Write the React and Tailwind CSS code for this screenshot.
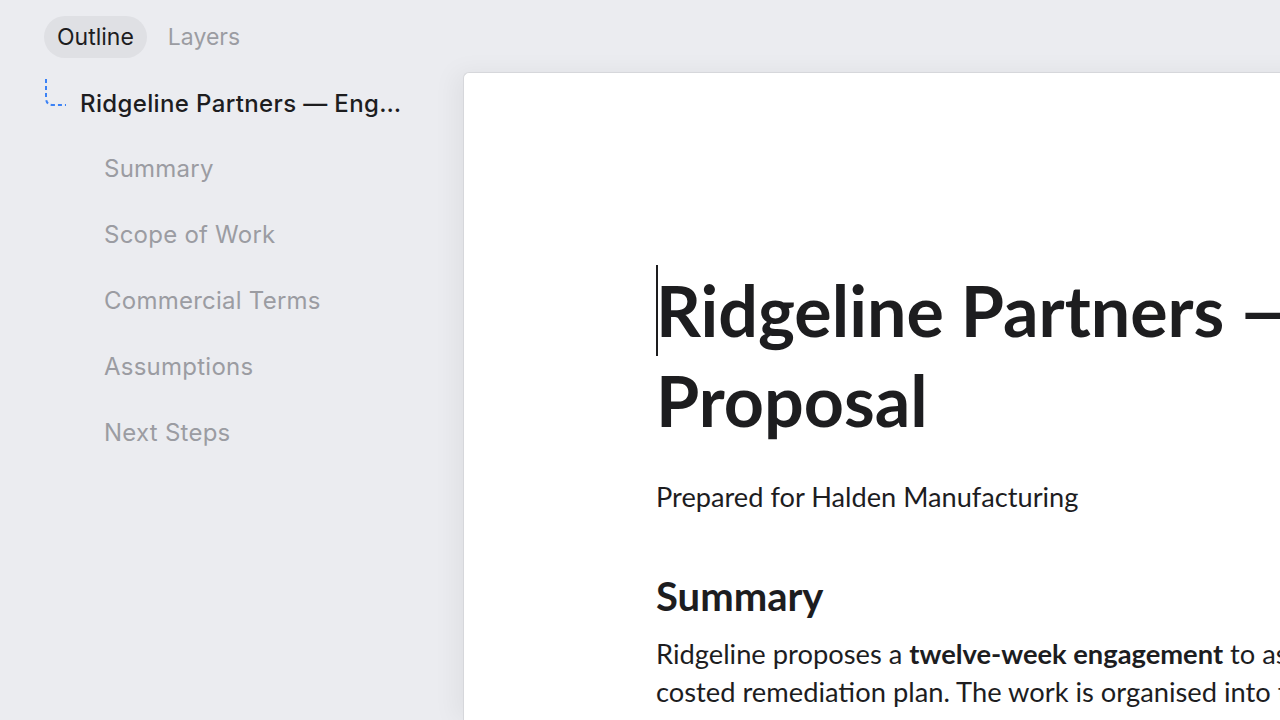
import React from "react";

const sections = ["Summary", "Scope of Work", "Commercial Terms", "Assumptions", "Next Steps"];

const TreeIcon = () => (
  <svg width="24" height="30" viewBox="0 0 24 30" className="shrink-0">
    <path
      d="M2 1 V20 Q2 27 9 27 H22"
      fill="none"
      stroke="#3b82f6"
      strokeWidth="2"
      strokeDasharray="4 3"
    />
  </svg>
);

const Sidebar = () => (
  <aside className="w-[463px] shrink-0 h-full flex flex-col font-['Inter',sans-serif]">
    <div className="flex items-center gap-[8px] pl-[44px] pt-4">
      <button className="h-[42px] px-[13px] rounded-full bg-[#dfe0e4] text-[23px] text-[#1d1d1f]">
        Outline
      </button>
      <button className="h-[42px] px-[13px] rounded-full text-[23px] text-[#9b9ca2]">
        Layers
      </button>
    </div>
    <nav className="flex flex-col pl-[44px] pr-[56px] mt-[20px]">
      <div className="flex items-start gap-[12px] h-[58px]">
        <TreeIcon />
        <span className="truncate pt-[8px] text-[24px] font-medium text-[#1d1d1f] tracking-[0.015em]">
          Ridgeline Partners — Engagement Proposal
        </span>
      </div>
      {sections.map((s) => (
        <div key={s} className="h-[66px] pl-[60px] flex items-center text-[24px] text-[#9b9ca2] tracking-[0.01em]">
          {s}
        </div>
      ))}
    </nav>
  </aside>
);

const Page = () => (
  <main className="flex-1 pt-[72px] min-w-0">
    <div className="h-full w-[1000px] bg-white rounded-tl-[6px] border-l border-t border-[#d6d7db] shadow-[-8px_0_24px_rgba(0,0,0,0.05)] pl-[192px] pt-[192px] font-['Lato',sans-serif] text-[#1d1d1f] overflow-hidden">
      <h1 className="relative text-[70px] font-bold leading-[90px] whitespace-nowrap">
        <span className="absolute left-0 top-0 w-[2px] h-[91px] bg-[#1d1d1f]" />
        Ridgeline Partners — Engagement
        <br />
        Proposal
      </h1>
      <p className="mt-[32px] text-[27.2px] leading-[40px]">Prepared for Halden Manufacturing</p>
      <h2 className="mt-[54px] text-[40px] font-bold leading-[50px]">Summary</h2>
      <p className="mt-[14px] text-[27.3px] leading-[38px] whitespace-nowrap">
        Ridgeline proposes a <strong>twelve-week engagement</strong> to assess Halden's current operations and deliver a
        <br />
        costed remediation plan. The work is organised into three phases.
      </p>
    </div>
  </main>
);

export default function App() {
  return (
    <div className="w-[1280px] h-[720px] bg-[#ebecf0] flex overflow-hidden">
      <Sidebar />
      <Page />
    </div>
  );
}
